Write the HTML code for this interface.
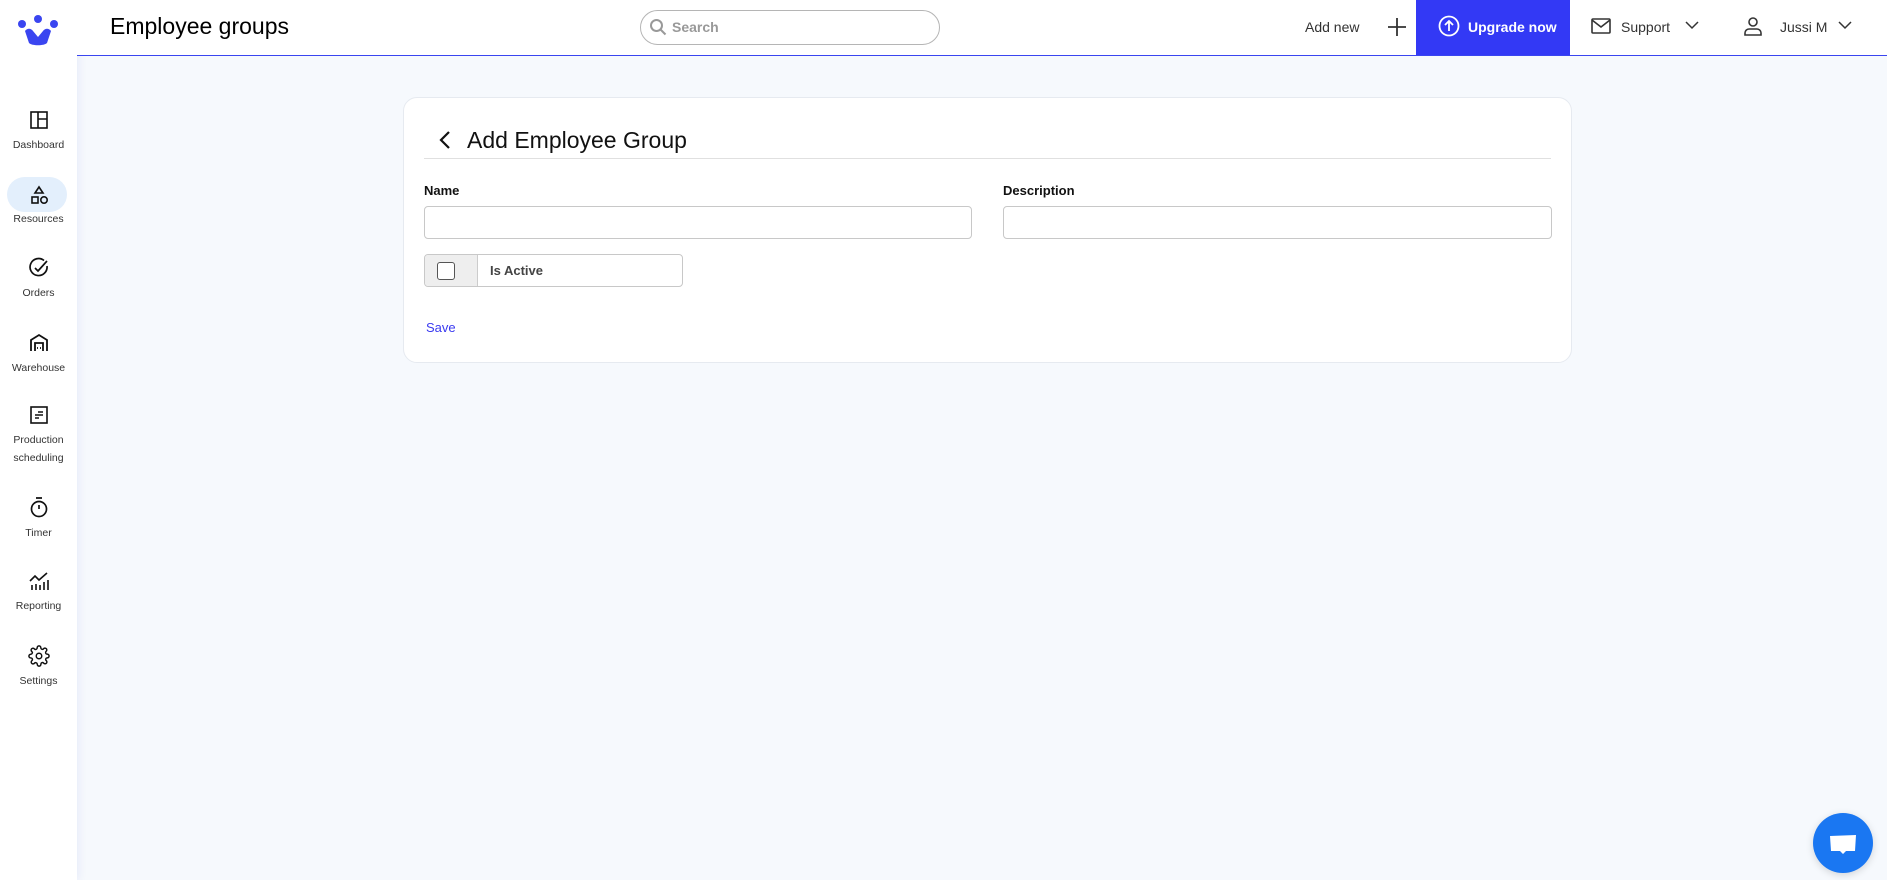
<!DOCTYPE html>
<html><head><meta charset="utf-8"><style>
*{box-sizing:border-box;margin:0;padding:0}
body{width:1887px;height:880px;overflow:hidden;background:#f6f9fd;font-family:"Liberation Sans",sans-serif;color:#111;position:relative}
.side{position:absolute;left:0;top:0;width:77px;height:880px;background:#fff;box-shadow:2px 0 8px rgba(60,80,200,.08)}
.head{position:absolute;left:77px;top:0;right:0;height:56px;background:#fff;border-bottom:1.5px solid #3a45f0}
.abs{position:absolute}
.nav{position:absolute;left:0;width:77px;text-align:center;font-size:10.5px;color:#333}
.nav svg{display:block;margin:0 auto}
.card{position:absolute;left:403px;top:97px;width:1169px;height:266px;background:#fff;border:1px solid #e6eaf0;border-radius:14px}
.inp{position:absolute;height:33px;border:1px solid #c8c8c8;border-radius:4px;background:#fff}
.lbl{position:absolute;font-size:13px;font-weight:bold;color:#111}
</style></head><body>
<div class="side">
  <svg class="abs" style="left:17px;top:15px" width="42" height="32" viewBox="0 0 42 32">
    <g fill="#3a45f0"><circle cx="5" cy="9" r="4"/><circle cx="21" cy="4" r="4"/><circle cx="37" cy="9" r="4"/>
    <path d="M8 16 C10 13 14 13 16 16 L21 22 L26 16 C28 13 32 13 34 16 L30 28 C27 31 15 31 12 28 Z"/></g>
  </svg>
  <div class="nav" style="top:110px"><svg width="20" height="20" viewBox="0 0 20 20" fill="none" stroke="#111" stroke-width="1.6"><rect x="2" y="2" width="16" height="16"/><path d="M9 2v16M9 9h9"/></svg><div style="margin-top:9px">Dashboard</div></div>
  <div class="abs" style="left:7px;top:177px;width:60px;height:35px;border-radius:18px;background:#e3effc"></div>
  <div class="nav" style="top:185px"><svg width="20" height="20" viewBox="0 0 20 20" fill="none" stroke="#111" stroke-width="1.6"><path d="M10 2l4 6H6z"/><rect x="3" y="12" width="6" height="6"/><circle cx="15" cy="15" r="3.2"/></svg><div style="margin-top:8px">Resources</div></div>
  <div class="nav" style="top:257px"><svg width="22" height="22" viewBox="0 0 22 22" fill="none" stroke="#111" stroke-width="1.7"><path d="M19 9a8.5 8.5 0 1 1-3-5.5"/><path d="M7 11l3 3 9-10"/></svg><div style="margin-top:8px">Orders</div></div>
  <div class="nav" style="top:332px"><svg width="22" height="22" viewBox="0 0 22 22" fill="none" stroke="#111" stroke-width="1.8"><path d="M3 19V8l8-5 8 5v11"/><path d="M7 19v-8h8v8"/><path d="M9 16h1M12 16h1"/></svg><div style="margin-top:8px">Warehouse</div></div>
  <div class="nav" style="top:405px"><svg width="20" height="20" viewBox="0 0 20 20" fill="none" stroke="#111" stroke-width="1.6"><rect x="2" y="2" width="16" height="16"/><path d="M9 7h5M6 10h8M6 13h4"/></svg><div style="margin-top:6px;line-height:18px">Production<br>scheduling</div></div>
  <div class="nav" style="top:496px"><svg width="22" height="22" viewBox="0 0 22 22" fill="none" stroke="#111" stroke-width="1.7"><circle cx="11" cy="13" r="7.5"/><path d="M8 2h6M11 13V9"/></svg><div style="margin-top:9px">Timer</div></div>
  <div class="nav" style="top:571px"><svg width="22" height="20" viewBox="0 0 22 20" fill="none" stroke="#111" stroke-width="1.6"><path d="M2 10l5-5 4 4 8-7"/><path d="M4 19v-5M8 19v-6M12 19v-5M16 19v-8M20 19v-10"/></svg><div style="margin-top:9px">Reporting</div></div>
  <div class="nav" style="top:645px"><svg width="22" height="22" viewBox="0 0 24 24" fill="none" stroke="#111" stroke-width="1.6"><circle cx="12" cy="12" r="3"/><path d="M19.4 15a1.7 1.7 0 0 0 .3 1.8l.1.1a2 2 0 1 1-2.8 2.8l-.1-.1a1.7 1.7 0 0 0-1.8-.3 1.7 1.7 0 0 0-1 1.5V21a2 2 0 1 1-4 0v-.1a1.7 1.7 0 0 0-1.1-1.5 1.7 1.7 0 0 0-1.8.3l-.1.1a2 2 0 1 1-2.8-2.8l.1-.1a1.7 1.7 0 0 0 .3-1.8 1.7 1.7 0 0 0-1.5-1H3a2 2 0 1 1 0-4h.1a1.7 1.7 0 0 0 1.5-1.1 1.7 1.7 0 0 0-.3-1.8l-.1-.1a2 2 0 1 1 2.8-2.8l.1.1a1.7 1.7 0 0 0 1.8.3H9a1.7 1.7 0 0 0 1-1.5V3a2 2 0 1 1 4 0v.1a1.7 1.7 0 0 0 1 1.5 1.7 1.7 0 0 0 1.8-.3l.1-.1a2 2 0 1 1 2.8 2.8l-.1.1a1.7 1.7 0 0 0-.3 1.8V9a1.7 1.7 0 0 0 1.5 1H21a2 2 0 1 1 0 4h-.1a1.7 1.7 0 0 0-1.5 1z"/></svg><div style="margin-top:8px">Settings</div></div>
</div>
<div class="head">
  <div class="abs" style="left:33px;top:13px;font-size:23px;color:#000">Employee groups</div>
  <div class="abs" style="left:563px;top:10px;width:300px;height:35px;border:1.5px solid #b5b5b5;border-radius:18px">
    <svg class="abs" style="left:8px;top:7px" width="18" height="18" viewBox="0 0 18 18" fill="none" stroke="#999" stroke-width="2"><circle cx="7.5" cy="7.5" r="5.5"/><path d="M11.5 11.5l5 5"/></svg>
    <span class="abs" style="left:31px;top:8px;font-size:14px;color:#999;font-weight:bold">Search</span>
  </div>
  <span class="abs" style="left:1228px;top:19px;font-size:14px;color:#333">Add new</span>
  <svg class="abs" style="left:1310px;top:17px" width="20" height="20" viewBox="0 0 20 20" stroke="#333" stroke-width="1.8"><path d="M10 1v18M1 10h18"/></svg>
  <div class="abs" style="left:1339px;top:0;width:154px;height:55px;background:#3339f5">
    <svg class="abs" style="left:22px;top:15px" width="22" height="22" viewBox="0 0 22 22" fill="none" stroke="#fff" stroke-width="1.8"><circle cx="11" cy="11" r="9.5"/><path d="M11 16V6M7 10l4-4 4 4"/></svg>
    <span class="abs" style="left:52px;top:19px;font-size:14px;font-weight:bold;color:#fff">Upgrade now</span>
  </div>
  <svg class="abs" style="left:1514px;top:18px" width="20" height="16" viewBox="0 0 20 16" fill="none" stroke="#333" stroke-width="1.6"><rect x="1" y="1" width="18" height="14" rx="1"/><path d="M1 2l9 7 9-7"/></svg>
  <span class="abs" style="left:1544px;top:19px;font-size:14px;color:#333">Support</span>
  <svg class="abs" style="left:1608px;top:20px" width="14" height="10" viewBox="0 0 14 10" fill="none" stroke="#333" stroke-width="1.5"><path d="M1 2l6 6 6-6"/></svg>
  <svg class="abs" style="left:1667px;top:16px" width="18" height="20" viewBox="0 0 18 20" fill="none" stroke="#333" stroke-width="1.6"><circle cx="9" cy="6" r="4"/><path d="M1 19v-2a4 4 0 0 1 4-4h8a4 4 0 0 1 4 4v2z"/></svg>
  <span class="abs" style="left:1703px;top:19px;font-size:14px;color:#333">Jussi M</span>
  <svg class="abs" style="left:1761px;top:20px" width="14" height="10" viewBox="0 0 14 10" fill="none" stroke="#333" stroke-width="1.5"><path d="M1 2l6 6 6-6"/></svg>
</div>
<div class="card">
  <svg class="abs" style="left:34px;top:32px" width="14" height="20" viewBox="0 0 14 20" fill="none" stroke="#111" stroke-width="2.2"><path d="M11 2L3 10l8 8"/></svg>
  <div class="abs" style="left:63px;top:29px;font-size:23px;color:#111">Add Employee Group</div>
  <div class="abs" style="left:20px;top:60px;width:1127px;height:1px;background:#e0e0e0"></div>
  <div class="lbl" style="left:20px;top:85px">Name</div>
  <div class="inp" style="left:20px;top:108px;width:548px"></div>
  <div class="lbl" style="left:599px;top:85px">Description</div>
  <div class="inp" style="left:599px;top:108px;width:549px"></div>
  <div class="abs" style="left:20px;top:156px;width:259px;height:33px;border:1px solid #c8c8c8;border-radius:4px;background:#fff;overflow:hidden">
    <div class="abs" style="left:0;top:0;width:53px;height:33px;background:#eee;border-right:1px solid #ccc"></div>
    <div class="abs" style="left:12px;top:7px;width:18px;height:18px;border:1.5px solid #555;border-radius:3px;background:#fff"></div>
    <span class="abs" style="left:65px;top:8px;font-size:13px;font-weight:bold;color:#444">Is Active</span>
  </div>
  <div class="abs" style="left:22px;top:222px;font-size:13px;color:#3a3af0">Save</div>
</div>
<div class="abs" style="left:1813px;top:813px;width:60px;height:60px;border-radius:50%;background:#1a77f2;box-shadow:0 2px 8px rgba(0,0,0,.15)">
  <svg class="abs" style="left:16px;top:20px" width="28" height="22" viewBox="0 0 28 22"><path d="M1 3l26-1-1 16H17l-3 3-3-3H2z" fill="#fff"/></svg>
</div>
</body></html>
